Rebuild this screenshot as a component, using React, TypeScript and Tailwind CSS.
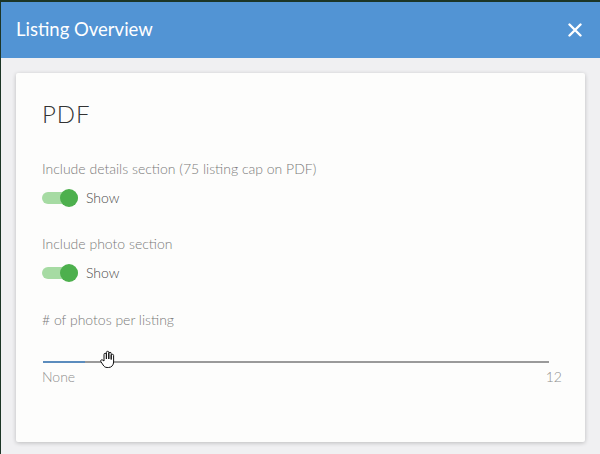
import { useState } from 'react';

function Toggle({ on }: { on: boolean }) {
  return (
    <div className="relative h-[12px] w-[36px] rounded-full bg-[#a6dba3]">
      <div
        className={`absolute top-[-3px] h-[18px] w-[18px] rounded-full bg-[#4db04d] ${on ? 'right-[0px]' : 'left-0'}`}
      />
    </div>
  );
}

function HandCursor() {
  return (
    <svg width="18" height="20" viewBox="0 0 18 20" className="absolute left-[56px] top-[-11px]">
      <path
        d="M5 11 V4.5 a1.2 1.2 0 0 1 2.4 0 V9 V2.5 a1.2 1.2 0 0 1 2.4 0 V9 V3.5 a1.2 1.2 0 0 1 2.4 0 V9.5 V5.5 a1.2 1.2 0 0 1 2.4 0 V12 c0 3 -2 5.5 -5 5.5 h-1.5 c-2 0 -3 -1 -4 -2.5 L1.8 11.5 a1.2 1.2 0 0 1 1.9 -1.4 Z"
        fill="#fff"
        stroke="#111"
        strokeWidth="1"
        strokeLinejoin="round"
      />
    </svg>
  );
}

export default function App() {
  const [details] = useState(true);
  const [photos] = useState(true);
  const value = 1;
  const pct = (value / 12) * 100;

  return (
    <div className="flex h-[454px] w-[600px] flex-col overflow-hidden border-t-2 border-l border-[#1c3526] bg-[#f0f0f2] font-['Lato',sans-serif]">
      <div className="flex h-[56px] shrink-0 items-center justify-between bg-[#5294d4] pl-[15px] pr-[18px]">
        <h1 className="text-[18.5px] font-normal tracking-[0px] text-white">Listing Overview</h1>
        <svg width="14" height="14" viewBox="0 0 14 14">
          <path d="M1.5 1.5 L12.5 12.5 M12.5 1.5 L1.5 12.5" stroke="#fff" strokeWidth="2.4" strokeLinecap="round" />
        </svg>
      </div>
      <div className="px-[15px] pt-[15px]">
        <div className="h-[369px] rounded-[2px] bg-[#fdfdfc] pl-[26px] pr-[23px] pt-[26px] shadow-[0_1px_4px_rgba(0,0,0,0.22)]">
          <h2 className="text-[24px] font-light leading-[30px] tracking-[1px] text-[#333]">PDF</h2>

          <p className="mt-[31px] text-[14px] font-light leading-[18px] text-[#7a7a7a]">
            Include details section (75 listing cap on PDF)
          </p>
          <div className="mt-[9px] flex items-center gap-[8px]">
            <Toggle on={details} />
            <span className="text-[14px] font-light text-[#4a4a4a]">Show</span>
          </div>

          <p className="mt-[27px] text-[14px] font-light leading-[18px] text-[#7a7a7a]">Include photo section</p>
          <div className="mt-[9px] flex items-center gap-[8px]">
            <Toggle on={photos} />
            <span className="text-[14px] font-light text-[#4a4a4a]">Show</span>
          </div>

          <p className="mt-[28px] text-[14px] font-light leading-[18px] text-[#7a7a7a]"># of photos per listing</p>

          <div className="relative ml-[1px] mr-[13px] mt-[32px] h-[2px] bg-[#9a9a9a]">
            <div className="absolute left-0 top-0 h-[2px] bg-[#5b8cbd]" style={{ width: `${pct}%` }} />
            <HandCursor />
          </div>
          <div className="mt-[5px] flex justify-between text-[14px] font-light leading-[18px] text-[#8e8e8e]">
            <span>None</span>
            <span>12</span>
          </div>
        </div>
      </div>
    </div>
  );
}
